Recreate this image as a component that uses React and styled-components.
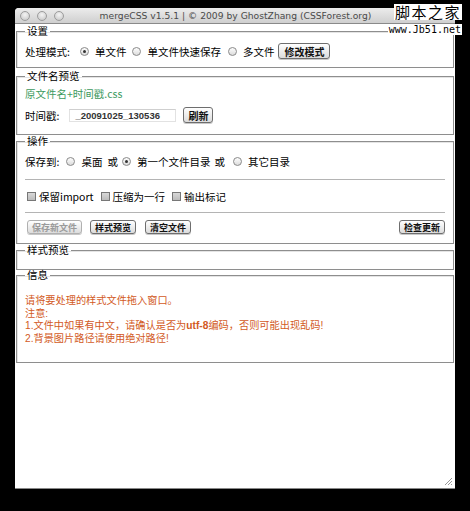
import styled, { createGlobalStyle } from 'styled-components';

const GlobalStyle = createGlobalStyle`
	html, body {
		margin: 0;
		padding: 0;
		background: #000;
	}
	body {
		font-family: 'Liberation Sans', 'Noto Sans CJK SC', sans-serif;
		font-size: 10.5px;
		color: #000;
	}
`;

const Stage = styled.div`
	position: relative;
	width: 470px;
	height: 511px;
	padding: 8px 0 0 15px;
	box-sizing: border-box;
	overflow: hidden;
`;

const Window = styled.div`
	width: 440px;
	height: 481px;
	background: #fff;
	border-radius: 4px 4px 0 0;
	display: flex;
	flex-direction: column;
	position: relative;
	border-bottom: 1px solid #888;
	box-sizing: border-box;
`;

const TitleBar = styled.div`
	height: 15px;
	flex: none;
	display: flex;
	align-items: center;
	border-radius: 4px 4px 0 0;
	background: linear-gradient(#ececec, #cfcfcf);
	border-bottom: 1px solid #8a8a8a;
	position: relative;
`;

const Lights = styled.div`
	display: flex;
	gap: 7px;
	padding-left: 5px;
`;

const Light = styled.span`
	width: 8px;
	height: 8px;
	border-radius: 50%;
	border: 1px solid #9c9c9c;
	background: radial-gradient(circle at 50% 35%, #f4f4f4, #c4c4c4);
`;

const Title = styled.div`
	position: absolute;
	left: 0;
	right: 0;
	text-align: center;
	font-family: 'DejaVu Sans', sans-serif;
	font-size: 9.2px;
	color: #4a4a4a;
	line-height: 15px;
	padding-left: 1px;
`;

const Body = styled.div`
	flex: 1;
	padding: 0 1px;
	display: flex;
	flex-direction: column;
`;

const Box = styled.fieldset`
	margin: ${(p) => p.$mt || 0}px 0 0;
	padding: 0 8px;
	height: ${(p) => p.$h}px;
	box-sizing: border-box;
	border: 1px solid #8e8e8e;
	box-shadow: inset 1px 1px 0 #e4e4e4;
	min-width: 0;
`;

const Legend = styled.legend`
	padding: 0 2px;
	line-height: 12px;
	font-size: 10.5px;
	font-family: 'Noto Sans CJK SC', sans-serif;
`;

const Row = styled.div`
	display: flex;
	align-items: center;
	height: ${(p) => p.$h || 14}px;
	margin-top: ${(p) => p.$mt || 0}px;
	font-family: 'Noto Sans CJK SC', sans-serif;
	white-space: nowrap;
`;

const Label = styled.span`
	margin-right: ${(p) => p.$mr || 0}px;
	margin-left: ${(p) => p.$ml || 0}px;
`;

const Radio = styled.span`
	width: 9px;
	height: 9px;
	box-sizing: border-box;
	border-radius: 50%;
	border: 1px solid #8a8a8a;
	background: linear-gradient(#fdfdfd, #dcdcdc);
	display: inline-flex;
	align-items: center;
	justify-content: center;
	margin: 0 6px 0 ${(p) => p.$ml || 0}px;
	flex: none;
	&::after {
		content: '';
		width: 3px;
		height: 3px;
		border-radius: 50%;
		background: ${(p) => (p.$on ? '#333' : 'transparent')};
	}
`;

const Check = styled.span`
	width: 9px;
	height: 9px;
	box-sizing: border-box;
	border: 1px solid #777;
	background: linear-gradient(#d8d8d8, #bcbcbc);
	margin: 0 3px 0 ${(p) => p.$ml || 0}px;
	flex: none;
`;

const Button = styled.span`
	display: inline-flex;
	align-items: center;
	height: ${(p) => p.$h || 14}px;
	box-sizing: border-box;
	padding: 0 ${(p) => p.$px || 4}px;
	border: 1px solid ${(p) => (p.$off ? '#b0b0b0' : '#6e6e6e')};
	border-radius: 3px;
	background: linear-gradient(#ffffff, #dcdcdc);
	font-family: 'Noto Sans CJK SC', sans-serif;
	font-size: ${(p) => p.$fs || 9}px;
	font-weight: bold;
	color: ${(p) => (p.$off ? '#9a9a9a' : '#111')};
	margin-left: ${(p) => p.$ml || 0}px;
	box-shadow: 0 1px 0 #c8c8c8;
`;

const Stamp = styled.span`
	width: 107px;
	height: 13px;
	box-sizing: border-box;
	border: 1px solid #e2e2e2;
	border-top-color: #cfcfcf;
	margin: 0 7px 0 10px;
	padding-left: 5px;
	font-size: 9.5px;
	font-weight: bold;
	font-family: 'Liberation Sans', sans-serif;
	color: #333;
	line-height: 11px;
`;

const Green = styled.div`
	margin-top: 6px;
	line-height: 12px;
	color: #3d9a5e;
	font-family: 'Noto Sans CJK SC', sans-serif;
`;

const Rule = styled.hr`
	margin: ${(p) => p.$mt}px 0 0;
	border: 0;
	border-top: 1px solid #b4b4b4;
	height: 0;
`;

const Spacer = styled.span`
	flex: 1;
`;

const Notes = styled.div`
	padding-top: 14px;
	color: #d25a1e;
	font-size: 10.2px;
	line-height: 12.5px;
	font-family: 'Liberation Sans', 'Noto Sans CJK SC', sans-serif;
`;

const Line = styled.div`
	height: 12.5px;
	white-space: nowrap;
`;

const Grip = styled.svg`
	position: absolute;
	right: 2px;
	bottom: 2px;
`;

const Mark = styled.div`
	position: absolute;
	right: 8px;
	top: 4px;
	display: flex;
	flex-direction: column;
	align-items: flex-end;
	gap: 4px;
`;

const MarkTitle = styled.span`
	background: #fff;
	color: #000;
	font-family: 'Noto Sans CJK SC', sans-serif;
	font-size: 15px;
	line-height: 16px;
	letter-spacing: 1.5px;
	padding: 0 1px;
`;

const MarkUrl = styled.span`
	background: #fff;
	color: #000;
	font-family: 'DejaVu Sans Mono', monospace;
	font-size: 10px;
	line-height: 11px;
	padding: 0 1px;
`;

const App = () => {
	return (
		<Stage>
			<GlobalStyle />
			<Window>
				<TitleBar>
					<Lights>
						<Light />
						<Light />
						<Light />
					</Lights>
					<Title>mergeCSS v1.5.1 | © 2009 by GhostZhang (CSSForest.org)</Title>
				</TitleBar>
				<Body>
					<Box $h={43} $mt={1}>
						<Legend>设置</Legend>
						<Row $h={16} $mt={6}>
							<Label $mr={10}>处理模式:</Label>
							<Radio $on />
							<Label>单文件</Label>
							<Radio $ml={6} />
							<Label>单文件快速保存</Label>
							<Radio $ml={7} />
							<Label>多文件</Label>
							<Button $h={16} $ml={4} $fs={10} $px={5}>修改模式</Button>
						</Row>
					</Box>
					<Box $h={65} $mt={2}>
						<Legend>文件名预览</Legend>
						<Green>原文件名+时间戳.css</Green>
						<Row $h={16} $mt={7}>
							<Label>时间戳:</Label>
							<Stamp>_20091025_130536</Stamp>
							<Button $h={16} $fs={10} $px={4}>刷新</Button>
						</Row>
					</Box>
					<Box $h={109}>
						<Legend>操作</Legend>
						<Row $mt={7}>
							<Label $mr={7}>保存到:</Label>
							<Radio />
							<Label>桌面</Label>
							<Label $ml={5} $mr={4}>或</Label>
							<Radio $on />
							<Label>第一个文件目录</Label>
							<Label $ml={4} $mr={8}>或</Label>
							<Radio />
							<Label>其它目录</Label>
						</Row>
						<Rule $mt={11} />
						<Row $mt={9}>
							<Check $ml={2} />
							<Label>保留import</Label>
							<Check $ml={7} />
							<Label>压缩为一行</Label>
							<Check $ml={7} />
							<Label>输出标记</Label>
						</Row>
						<Rule $mt={9} />
						<Row $mt={7}>
							<Button $off $ml={2}>保存新文件</Button>
							<Button $ml={8}>样式预览</Button>
							<Button $ml={9}>清空文件</Button>
							<Spacer />
							<Button>检查更新</Button>
						</Row>
					</Box>
					<Box $h={26}>
						<Legend>样式预览</Legend>
					</Box>
					<Box $h={94} $mt={-1}>
						<Legend>信息</Legend>
						<Notes>
							<Line>请将要处理的样式文件拖入窗口。</Line>
							<Line>注意:</Line>
							<Line>
								1.文件中如果有中文，请确认是否为<b>utf-8</b>编码，否则可能出现乱码!
							</Line>
							<Line>2.背景图片路径请使用绝对路径!</Line>
						</Notes>
					</Box>
				</Body>
				<Grip width='9' height='9' viewBox='0 0 9 9'>
					<path d='M8 1 L1 8 M8 4 L4 8 M8 7 L7 8' stroke='#999' strokeWidth='1' />
				</Grip>
			</Window>
			<Mark>
				<MarkTitle>脚本之家</MarkTitle>
				<MarkUrl>www.Jb51.net</MarkUrl>
			</Mark>
		</Stage>
	);
};

export default App;
